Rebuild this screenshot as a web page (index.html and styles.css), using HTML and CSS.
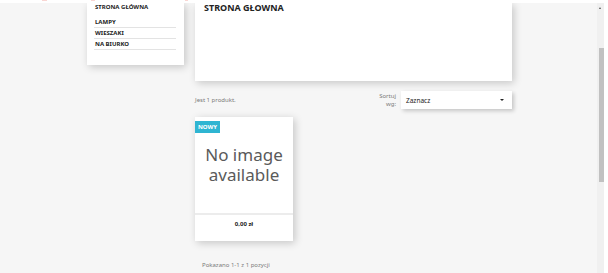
FILE: index.html
```html
<!DOCTYPE html>
<html lang="pl">
<head>
    <meta charset="UTF-8">
    <meta name="viewport" content="width=device-width, initial-scale=1.0">
    <title>Strona główna</title>
    <link rel="stylesheet" href="styles.css">
</head>
<body>
    <div class="topbar">
        <span class="topbar-mark mark-a"></span>
        <span class="topbar-mark mark-b"></span>
        <span class="topbar-mark mark-c"></span>
    </div>

    <div class="frame">
        <div class="page">
            <div class="layout">
                <aside class="sidebar">
                    <div class="sidebar-title">STRONA GŁÓWNA</div>
                    <ul class="category-list">
                        <li>LAMPY</li>
                        <li>WIESZAKI</li>
                        <li>NA BIURKO</li>
                    </ul>
                </aside>

                <main class="content">
                    <div class="category-header">
                        <h1>STRONA GŁOWNA</h1>
                    </div>

                    <div class="products-top">
                        <p class="products-count">Jest 1 produkt.</p>
                        <div class="sort">
                            <span class="sort-label">Sortuj<br>wg:</span>
                            <div class="sort-select">
                                <span>Zaznacz</span>
                                <span class="caret"></span>
                            </div>
                        </div>
                    </div>

                    <div class="product-card">
                        <span class="badge">NOWY</span>
                        <div class="product-thumb">No image<br>available</div>
                        <div class="product-info">0,00 zł</div>
                    </div>

                    <p class="pagination">Pokazano 1-1 z 1 pozycji</p>
                </main>
            </div>
        </div>

        <div class="scrollbar">
            <span class="scroll-arrow"></span>
            <span class="scroll-thumb"></span>
        </div>
        <div class="edge"></div>
    </div>
</body>
</html>
```

FILE: styles.css
```css
:root {
    --page-bg: #f6f6f6;
    --text-color: #232323;
    --muted-color: #7a7a7a;
    --accent-color: #2fb5d2;
    --card-shadow: 2px 2px 8px 0 rgba(0, 0, 0, 0.2);
}

body {
    margin: 0;
    width: 608px;
    height: 273px;
    overflow: hidden;
    font-family: "Noto Sans", "Open Sans", sans-serif;
    color: var(--text-color);
    background: white;
}

.topbar {
    height: 3px;
    background: white;
    display: flex;
    position: relative;
    z-index: 2;
}

.topbar-mark {
    height: 1px;
    background: #f9d6d3;
}

.mark-a {
    width: 5px;
    margin-left: 42px;
}

.mark-b {
    width: 4px;
    margin-left: 44px;
}

.mark-c {
    width: 3px;
    margin-left: 90px;
}

.frame {
    display: flex;
    height: 270px;
}

.page {
    width: 597px;
    background: var(--page-bg);
    overflow: hidden;
}

.layout {
    display: flex;
    align-items: flex-start;
    gap: 11px;
    padding-left: 87px;
}

/* left column */
.sidebar {
    width: 97px;
    box-sizing: border-box;
    padding: 0 8px 15px 7px;
    background: white;
    box-shadow: var(--card-shadow);
}

.sidebar-title {
    font-size: 6px;
    font-weight: 700;
    line-height: 9px;
    padding-left: 1px;
}

.category-list {
    list-style: none;
    margin: 5px 0 0;
    padding: 0;
}

.category-list li {
    font-size: 6px;
    font-weight: 700;
    line-height: 10px;
    padding-left: 1px;
    border-bottom: 1px solid #e3e3e3;
}

/* main column */
.content {
    width: 317px;
}

.category-header {
    height: 78px;
    padding-left: 9px;
    background: white;
    box-shadow: var(--card-shadow);
}

.category-header h1 {
    margin: 0;
    font-size: 9px;
    line-height: 9px;
    font-weight: 700;
}

.products-top {
    display: flex;
    align-items: center;
    justify-content: space-between;
    margin-top: 10px;
    height: 18px;
}

.products-count {
    margin: 0;
    font-size: 6px;
    color: var(--muted-color);
}

.sort {
    display: flex;
    align-items: center;
    gap: 5px;
}

.sort-label {
    font-size: 6px;
    line-height: 8.3px;
    text-align: right;
    color: var(--muted-color);
}

.sort-select {
    width: 111px;
    height: 18px;
    box-sizing: border-box;
    padding: 0 8px 0 5px;
    display: flex;
    align-items: center;
    justify-content: space-between;
    background: white;
    box-shadow: 2px 2px 4px 0 rgba(0, 0, 0, 0.2);
    font-size: 6.5px;
}

.caret {
    width: 0;
    height: 0;
    border-left: 2px solid transparent;
    border-right: 2px solid transparent;
    border-top: 2.5px solid var(--text-color);
}

.product-card {
    position: relative;
    width: 98px;
    height: 124px;
    margin-top: 8px;
    background: white;
    box-shadow: var(--card-shadow);
    display: flex;
    flex-direction: column;
}

.badge {
    position: absolute;
    top: 4px;
    left: 0;
    width: 25px;
    height: 12px;
    display: flex;
    align-items: center;
    justify-content: center;
    background: var(--accent-color);
    color: white;
    font-size: 6px;
    font-weight: 700;
}

.product-thumb {
    height: 96px;
    display: flex;
    align-items: center;
    justify-content: center;
    text-align: center;
    font-size: 17px;
    line-height: 20px;
    color: #5a5a5a;
}

.product-info {
    flex: 1;
    border-top: 2px solid #ececec;
    padding-top: 5px;
    text-align: center;
    font-size: 6px;
    line-height: 9px;
    font-weight: 700;
}

.pagination {
    margin: 20px 0 0;
    padding-left: 7px;
    font-size: 6px;
    line-height: 9px;
    color: var(--muted-color);
}

/* fake scrollbar of the frame */
.scrollbar {
    width: 7px;
    background: #f0f0f0;
    display: flex;
    flex-direction: column;
    padding-top: 4px;
    box-sizing: border-box;
}

.scroll-arrow {
    width: 0;
    height: 0;
    margin-left: 2px;
    border-left: 1.5px solid transparent;
    border-right: 1.5px solid transparent;
    border-bottom: 2px solid #505050;
}

.scroll-thumb {
    width: 5px;
    height: 134px;
    margin: 39px 0 0 2px;
    background: #c1c1c1;
}

.edge {
    width: 4px;
    background: white;
}
```
